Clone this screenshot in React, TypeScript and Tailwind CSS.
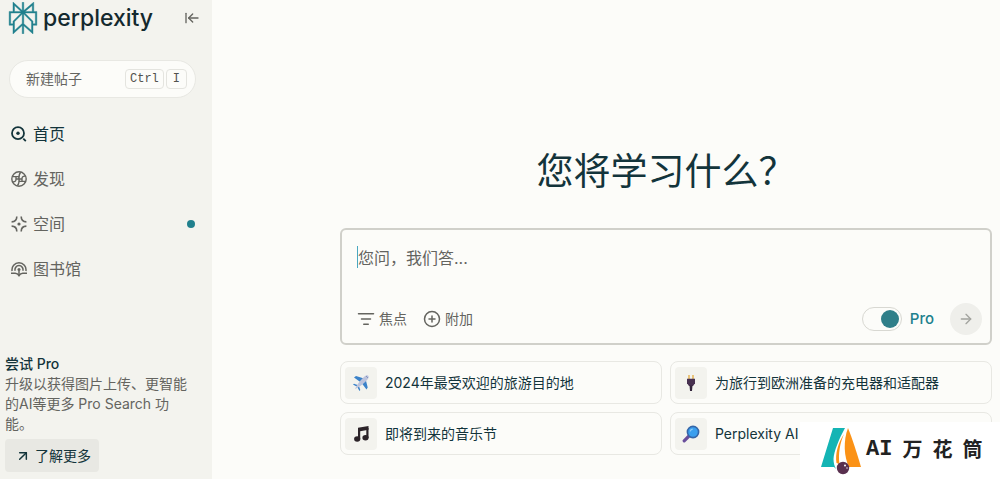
import {
  ArrowLeftToLine,
  ArrowRight,
  ArrowUpRight,
  CirclePlus,
  ListFilter,
} from "lucide-react";
import { FC, ReactNode, useState } from "react";
import { SiPerplexity } from "react-icons/si";

const HomeIcon = () => (
  <svg viewBox="0 0 16 16" className="h-4 w-4" fill="none" stroke="currentColor" strokeWidth="1.8">
    <circle cx="7" cy="7.2" r="6" />
    <circle cx="7" cy="7.2" r="1.7" fill="currentColor" stroke="none" />
    <path d="M12.3 12.7l2.500 2.500" />
  </svg>
);

const DiscoverIcon = () => (
  <svg viewBox="0 0 16 16" className="h-4 w-4" fill="none" stroke="currentColor" strokeWidth="1.4">
    <circle cx="8" cy="8" r="7.2" />
    <path d="M9.600 1.200C8.200 2.800 7.800 4.500 7.800 8.200M1.200 5.600h6.600M6.400 14.800C7.800 13.200 8.200 11.500 8.200 7.800M14.800 10.400H8.200M1.800 10.800c2.200.2 3.200-.6 3.200-2.600V5.600M14.200 5.200c-2.200-.2-3.200.6-3.200 2.600v2.600M8 8h3M5 8h3" />
  </svg>
);

const SpaceIcon = () => (
  <svg viewBox="0 0 16 16" className="h-4 w-4" fill="none" stroke="currentColor" strokeWidth="1.6">
    <path d="M5.800.6C5.800 3.800 3.800 5.800.6 5.900M10.200.6c0 3.200 2 5.200 5.200 5.300M5.800 15.400c0-3.200-2-5.200-5.200-5.300M10.200 15.400c0-3.200 2-5.200 5.200-5.300" />
    <circle cx="8" cy="8" r="1.600" fill="currentColor" stroke="none" />
  </svg>
);

const LibraryIcon = () => (
  <svg viewBox="0 0 16 16" className="h-4 w-4" fill="none" stroke="currentColor" strokeWidth="1.500">
    <path d="M1.100 10a7 7 0 1 1 13.800 0M4.200 9.800a4 4 0 1 1 7.600 0" />
    <path d="M0 12.300h4.200c1.700 0 2.900.8 3.800 2.300.9-1.500 2.100-2.300 3.800-2.300H16" />
    <path d="M8 9.500v5" />
    <circle cx="8" cy="8.600" r="1.500" fill="currentColor" stroke="none" />
  </svg>
);

const PlaneIcon = () => (
  <svg viewBox="0 0 18 18" className="h-[18px] w-[18px]">
    <path d="M2 3.500l2-1.500 8 2.500-3 4zM14.500 15.500l1.200-2-2-8-4.500 3z" fill="#3b82c9" />
    <path d="M1 10.500l1-.7 3.500 1.200-1 1.500zM7.500 17l.8-1-1.200-3.500-1.600 1z" fill="#3b82c9" />
    <path d="M3 15C5.500 9.500 10 4 14 1.500c1.800-.8 3.300.7 2.500 2.500C14 8 8.500 12.500 3 15z" fill="#bcc3dc" />
    <path d="M14.200 2.200l1.600 1.600" stroke="#7688b8" />
  </svg>
);

const MusicIcon = () => (
  <svg viewBox="0 0 18 18" className="h-[18px] w-[18px]" fill="#2b2328">
    <path d="M6 2.800L16.500 1v3.800L8.200 6.300v8H6z" />
    <path d="M14.300 3h2.200v10h-2.200z" />
    <ellipse cx="5.200" cy="14" rx="3.100" ry="2.700" />
    <ellipse cx="13.500" cy="12.700" rx="3.100" ry="2.700" />
  </svg>
);

const PlugIcon = () => (
  <svg viewBox="0 0 18 18" className="h-[18px] w-[18px]">
    <path d="M6.300 1h1.400v4H6.300zM10.300 1h1.400v4h-1.400z" fill="#e5b04a" />
    <path d="M5 4.800h8v4.400L11 12H7L5 9.200z" fill="#483150" />
    <path d="M7.500 11.500h3l-.5 5.500H8z" fill="#33243b" />
  </svg>
);

const SearchIcon = () => (
  <svg viewBox="0 0 18 18" className="h-[18px] w-[18px]">
    <path d="M7 11l-4.800 4.800" stroke="#694e9b" strokeWidth="3.200" strokeLinecap="round" />
    <circle cx="11" cy="7" r="5.600" fill="#3a9fee" stroke="#3566a8" strokeWidth="1.600" />
    <path d="M8.200 6.400c.3-1.200 1.200-2 2.500-2.200" stroke="#8fcbf7" strokeWidth="1.200" fill="none" />
  </svg>
);

const navItems: { label: string; icon: ReactNode; active?: boolean; dot?: boolean }[] = [
  { label: "首页", icon: <HomeIcon />, active: true },
  { label: "发现", icon: <DiscoverIcon /> },
  { label: "空间", icon: <SpaceIcon />, dot: true },
  { label: "图书馆", icon: <LibraryIcon /> },
];

const suggestions: { text: string; icon: ReactNode }[] = [
  { text: "2024年最受欢迎的旅游目的地", icon: <PlaneIcon /> },
  { text: "为旅行到欧洲准备的充电器和适配器", icon: <PlugIcon /> },
  { text: "即将到来的音乐节", icon: <MusicIcon /> },
  { text: "Perplexity AI", icon: <SearchIcon /> },
];

const Sidebar: FC = () => (
  <aside className="flex w-53 shrink-0 flex-col bg-[#f3f3ee]">
    <div className="flex h-9 items-center justify-between pl-[7px] pr-3">
      <a href="#" className="flex items-center gap-1">
        <SiPerplexity size={32} className="text-[#20808d]" stroke="currentColor" strokeWidth={0.3} />
        <span className="text-[23px] font-medium leading-8 text-[#13292e]">perplexity</span>
      </a>
      <button aria-label="收起" className="cursor-pointer text-[#64645f]">
        <ArrowLeftToLine className="h-4 w-4" strokeWidth={2} />
      </button>
    </div>

    <button className="ml-[9px] mr-4 mt-6 flex h-[38px] cursor-pointer items-center justify-between rounded-full border border-[#e8e8e3] bg-[#fcfcf9] pl-4 pr-2 text-sm text-[#64645f]">
      <span>新建帖子</span>
      <span className="flex gap-0.5 font-['Liberation_Mono',monospace] text-xs text-[#52524e]">
        <kbd className="flex h-5 items-center rounded border border-[#e4e4df] px-1 font-[inherit]">Ctrl</kbd>
        <kbd className="flex h-5 items-center rounded border border-[#e4e4df] px-1.5 font-[inherit]">I</kbd>
      </span>
    </button>

    <nav className="mt-[13px] flex flex-col">
      {navItems.map((item) => (
        <a
          key={item.label}
          href="#"
          className={`flex h-[45px] items-center gap-1.5 pl-[11px] pr-[17px] text-base ${
            item.active ? "text-[#13343b]" : "text-[#64645f]"
          }`}
        >
          {item.icon}
          <span>{item.label}</span>
          {item.dot && <span className="ml-auto h-2 w-2 rounded-full bg-[#20808d]" />}
        </a>
      ))}
    </nav>

    {/* upgrade */}
    <div className="mt-auto flex flex-col items-start pb-[7px] pl-[5px] pr-4 text-sm leading-5">
      <h2 className="font-medium text-[#13343b]">尝试 Pro</h2>
      <p className="text-[#64645f]">升级以获得图片上传、更智能的AI等更多 Pro Search 功能。</p>
      <button className="mt-[5px] flex h-[33px] cursor-pointer items-center gap-1 rounded bg-[#e8e8e3] pl-2.5 pr-2 text-[#13343b]">
        <ArrowUpRight className="h-4 w-4" strokeWidth={2.2} />
        <span>了解更多</span>
      </button>
    </div>
  </aside>
);

const Composer: FC = () => {
  const [pro, setPro] = useState(true);

  return (
    <form
      onSubmit={(e) => e.preventDefault()}
      className="rounded-md border-2 border-[#d0d0ca] bg-[#fcfcf9] pb-2 pl-[15px] pr-2 pt-4"
    >
      <div className="flex">
        <span className="h-[22px] w-px bg-[#4aa8c0]" />
        <textarea
          aria-label="您问，我们答..."
          placeholder="您问，我们答..."
          className="h-[57px] w-full resize-none bg-transparent text-base leading-6 outline-none placeholder:text-[#64645f]"
        />
      </div>
      <div className="flex h-8 items-center text-sm text-[#64645f]">
        <button type="button" className="flex cursor-pointer items-center gap-1">
          <ListFilter className="h-[18px] w-[18px]" />
          <span>焦点</span>
        </button>
        <button type="button" className="ml-4 flex cursor-pointer items-center gap-1">
          <CirclePlus className="h-[18px] w-[18px]" />
          <span>附加</span>
        </button>
        <label className="ml-auto flex cursor-pointer items-center gap-2 text-[15px] font-medium text-[#20808d]">
          <input
            type="checkbox"
            role="switch"
            checked={pro}
            onChange={(e) => setPro(e.target.checked)}
            className="flex h-6 w-10 cursor-pointer appearance-none items-center rounded-full border border-[#d8d8d2] px-0.5 before:h-[18px] before:w-[18px] before:rounded-full before:bg-[#8f918b] checked:justify-end checked:before:bg-[#2f7f89]"
          />
          Pro
        </label>
        <button
          type="submit"
          aria-label="提交"
          className="ml-4 flex h-8 w-8 cursor-pointer items-center justify-center rounded-full bg-[#efefeb] text-[#a3a49f]"
        >
          <ArrowRight className="h-4 w-4" />
        </button>
      </div>
    </form>
  );
};

const Watermark: FC = () => (
  <div className="absolute bottom-0 right-0 flex h-[57px] w-50 items-center bg-white pl-5">
    <svg viewBox="0 0 42 48" className="h-12 w-[42px]">
      <path d="M13 1h12C19 12 14 24 13.500 32c0 4 1 7 2.500 10L14 40H1z" fill="#14b4b4" />
      <path d="M28 1c4 10 9 25 13 39H29C24 30 23 14 28 1z" fill="#fb9216" />
      <path d="M24 7c-6 9-9 20-7.500 29l3 1C18 27 20 16 24 7z" fill="#fb9216" />
      <circle cx="23" cy="41" r="6.200" fill="#59304f" />
      <circle cx="25" cy="38.500" r="1" fill="#fff" />
      <circle cx="27" cy="41" r=".7" fill="#fff" />
    </svg>
    <div className="flex items-center gap-2.5 pl-1 text-xl font-bold text-[#222]">
      <span className="font-['Liberation_Mono',monospace] text-[22px]">AI</span>
      <span>万</span>
      <span>花</span>
      <span>筒</span>
    </div>
  </div>
);

const App: FC = () => {
  return (
    <div className="relative flex min-h-screen overflow-hidden bg-[#fcfcf9] font-['Inter','Noto_Sans_CJK_SC',sans-serif]">
      <Sidebar />
      <main className="flex min-w-0 flex-1 flex-col pb-6 pl-32 pr-2 pt-36">
        <h1 className="text-center text-[37px] font-normal leading-14 text-[#13343b]">您将学习什么？</h1>
        <div className="mt-7">
          <Composer />
        </div>
        <div className="mt-4 grid grid-cols-2 gap-2">
          {suggestions.map((item) => (
            <button
              key={item.text}
              className="flex h-[43px] cursor-pointer items-center gap-2 rounded-lg border border-[#e8e8e3] px-1 text-left text-sm text-[#13343b]"
            >
              <span className="flex h-8 w-8 shrink-0 items-center justify-center rounded bg-[#f3f3ee]">
                {item.icon}
              </span>
              <span className="truncate">{item.text}</span>
            </button>
          ))}
        </div>
      </main>
      <Watermark />
    </div>
  );
};

export default App;
